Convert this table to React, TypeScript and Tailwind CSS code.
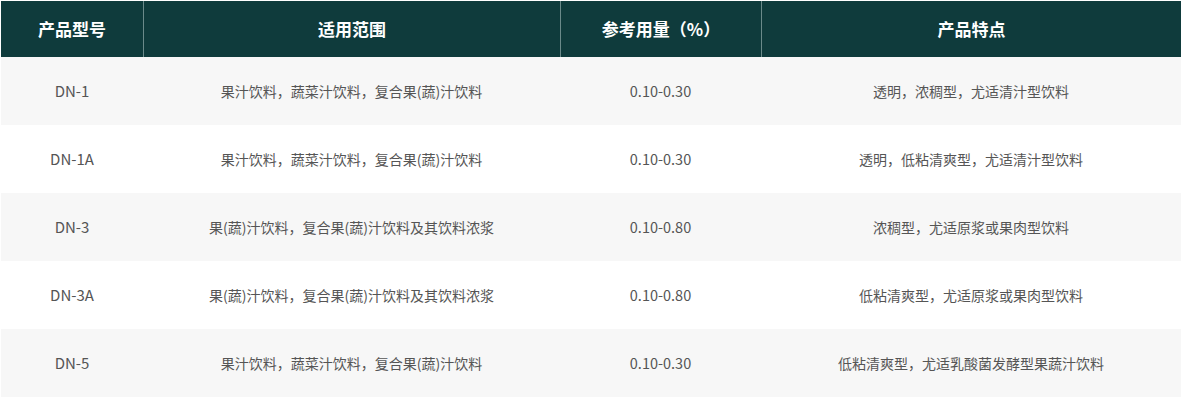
const ROWS = [
  {
    model: "DN-1",
    scope: "果汁饮料，蔬菜汁饮料，复合果(蔬)汁饮料",
    dose: "0.10-0.30",
    feature: "透明，浓稠型，尤适清汁型饮料",
  },
  {
    model: "DN-1A",
    scope: "果汁饮料，蔬菜汁饮料，复合果(蔬)汁饮料",
    dose: "0.10-0.30",
    feature: "透明，低粘清爽型，尤适清汁型饮料",
  },
  {
    model: "DN-3",
    scope: "果(蔬)汁饮料，复合果(蔬)汁饮料及其饮料浓浆",
    dose: "0.10-0.80",
    feature: "浓稠型，尤适原浆或果肉型饮料",
  },
  {
    model: "DN-3A",
    scope: "果(蔬)汁饮料，复合果(蔬)汁饮料及其饮料浓浆",
    dose: "0.10-0.80",
    feature: "低粘清爽型，尤适原浆或果肉型饮料",
  },
  {
    model: "DN-5",
    scope: "果汁饮料，蔬菜汁饮料，复合果(蔬)汁饮料",
    dose: "0.10-0.30",
    feature: "低粘清爽型，尤适乳酸菌发酵型果蔬汁饮料",
  },
];

const COLS = "grid grid-cols-[142px_417px_201px_1fr]";

export default function App() {
  return (
    <div className="w-[1181px] h-[397px] bg-white pt-px pl-px font-['Noto_Sans_CJK_SC','Noto_Sans',sans-serif] overflow-hidden">
      <div className={`${COLS} h-[56px] bg-[#0f3b3c] text-white text-[17px] font-bold`}>
        <div className="flex items-center justify-center">产品型号</div>
        <div className="flex items-center justify-center border-l border-[#6b8a8a]">适用范围</div>
        <div className="flex items-center justify-center border-l border-[#6b8a8a]">参考用量（%）</div>
        <div className="flex items-center justify-center border-l border-[#6b8a8a]">产品特点</div>
      </div>
      {ROWS.map((row, i) => (
        <div
          key={row.model}
          className={`${COLS} h-[68px] text-[14px] text-[#555555] ${
            i % 2 === 0 ? "bg-[#f7f7f7]" : "bg-white"
          }`}
        >
          <div className="flex items-center justify-center text-[15px]">{row.model}</div>
          <div className="flex items-center justify-center">{row.scope}</div>
          <div className="flex items-center justify-center text-[14.5px]">{row.dose}</div>
          <div className="flex items-center justify-center">{row.feature}</div>
        </div>
      ))}
    </div>
  );
}
